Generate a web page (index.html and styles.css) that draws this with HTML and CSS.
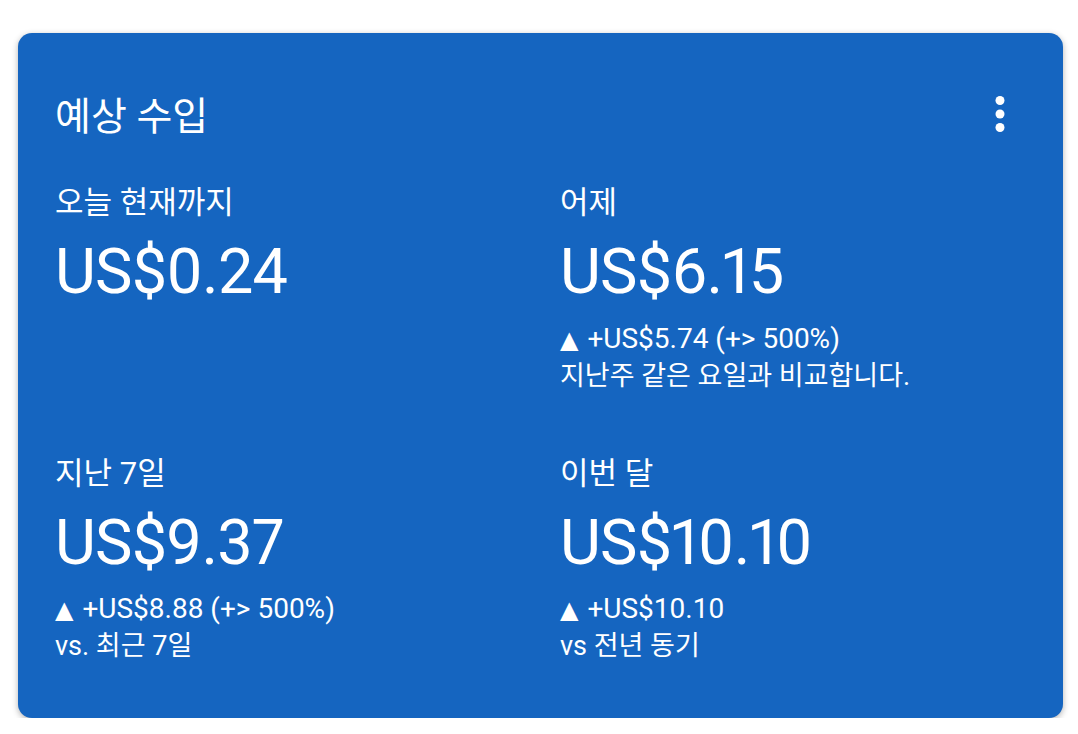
FILE: index.html
```html
<!DOCTYPE html>
<html lang="ko">
<head>
<meta charset="utf-8">
<title>예상 수입</title>
<link rel="stylesheet" href="styles.css">
</head>
<body>
<section class="card">
  <header class="card-header">
    <h1 class="title">예상 수입</h1>
    <button class="more" aria-label="더보기">
      <svg viewBox="0 0 24 24" width="54" height="54"><circle cx="12" cy="6" r="2" fill="#fff"/><circle cx="12" cy="12" r="2" fill="#fff"/><circle cx="12" cy="18" r="2" fill="#fff"/></svg>
    </button>
  </header>
  <div class="grid">
    <div class="stat">
      <div class="label">오늘 현재까지</div>
      <div class="amount">US$0.24</div>
    </div>
    <div class="stat">
      <div class="label">어제</div>
      <div class="amount">US$6.15</div>
      <div class="delta change"><span class="tri">▲</span> +US$5.74 (+&gt; 500%)</div>
      <div class="delta note">지난주 같은 요일과 비교합니다.</div>
    </div>
    <div class="stat">
      <div class="label">지난 7일</div>
      <div class="amount">US$9.37</div>
      <div class="delta change"><span class="tri">▲</span> +US$8.88 (+&gt; 500%)</div>
      <div class="delta note">vs. 최근 7일</div>
    </div>
    <div class="stat">
      <div class="label">이번 달</div>
      <div class="amount">US$10.10</div>
      <div class="delta change"><span class="tri">▲</span> +US$10.10</div>
      <div class="delta note">vs 전년 동기</div>
    </div>
  </div>
</section>
</body>
</html>
```
FILE: styles.css
```css
html, body {
  margin: 0;
  padding: 0;
  background: #ffffff;
}
body {
  font-family: Roboto, "Noto Sans CJK KR", sans-serif;
  color: #ffffff;
}
.card {
  box-sizing: border-box;
  width: 1045px;
  height: 685px;
  margin: 33px 0 0 18px;
  background: #1565c0;
  border-radius: 14px;
  box-shadow: 0 2px 6px rgba(0, 0, 0, 0.3);
  padding: 62px 36px 0 37px;
}
.card-header {
  display: flex;
  justify-content: space-between;
  align-items: flex-start;
}
.title {
  margin: 0;
  font-size: 39px;
  font-weight: 400;
  line-height: 44px;
}
.more {
  margin: -8px 0 0 0;
  padding: 0;
  border: 0;
  background: none;
  width: 54px;
  height: 54px;
  display: block;
}
.more svg { display: block; }
.grid {
  display: grid;
  grid-template-columns: 505px 1fr;
  row-gap: 60px;
  margin-top: 42px;
}
.label {
  font-size: 31px;
  line-height: 40px;
}
.amount {
  font-size: 63px;
  line-height: 72px;
  margin-top: 13px;
  margin-bottom: 12.5px;
  letter-spacing: -0.8px;
  font-variant-numeric: proportional-nums;
}
.delta {
  line-height: 36px;
}
.change {
  font-size: 28px;
}
.note {
  font-size: 27px;
}
.tri {
  font-family: "DejaVu Sans", sans-serif;
  font-size: 24px;
  margin-right: 2px;
}
```
